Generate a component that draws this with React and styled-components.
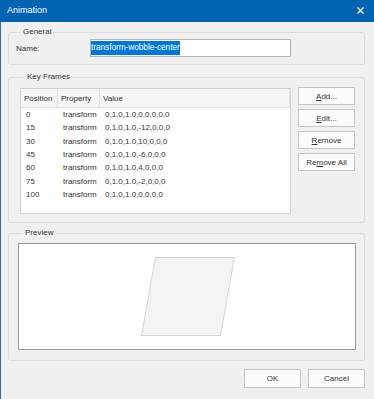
import React from "react";
import styled, { createGlobalStyle } from "styled-components";

const GlobalStyle = createGlobalStyle`
  html, body {
    margin: 0;
    padding: 0;
    background: #f0f0f0;
  }
  body {
    font-family: "Liberation Sans", Arial, sans-serif;
    font-size: 8px;
    color: #1e1e1e;
  }
`;

const frames = [
  { pos: "0", prop: "transform", value: "0,1.0,1.0,0,0,0,0,0" },
  { pos: "15", prop: "transform", value: "0,1.0,1.0,-12,0,0,0" },
  { pos: "30", prop: "transform", value: "0,1.0,1.0,10,0,0,0" },
  { pos: "45", prop: "transform", value: "0,1.0,1.0,-6,0,0,0" },
  { pos: "60", prop: "transform", value: "0,1.0,1.0,4,0,0,0" },
  { pos: "75", prop: "transform", value: "0,1.0,1.0,-2,0,0,0" },
  { pos: "100", prop: "transform", value: "0,1.0,1.0,0,0,0,0" },
];

const Window = styled.div`
  width: 374px;
  height: 399px;
  display: flex;
  flex-direction: column;
  overflow: hidden;
`;

const TitleBar = styled.div`
  height: 22px;
  flex: none;
  background: #0063b1;
  color: #fff;
  display: flex;
  align-items: center;
  justify-content: space-between;
  padding: 0 10px 2px 7px;
  box-sizing: border-box;
  font-size: 9px;
`;

const CloseIcon = styled.svg`
  width: 7px;
  height: 7px;
  display: block;
`;

const Body = styled.div`
  flex: 1;
  border-left: 1px solid #2b6cb4;
  padding: 5px 9px 0 7px;
  display: flex;
  flex-direction: column;
`;

const Group = styled.fieldset`
  margin: ${(p) => p.$top || 0}px 0 0 0;
  padding: ${(p) => p.$pad};
  border: 1px solid #dcdcdc;
  border-radius: 3px;
  min-width: 0;
`;

const Legend = styled.legend`
  margin-left: 5px;
  padding: 0 2px;
  font-size: 8px;
  line-height: 10px;
  color: #333;
`;

const FieldRow = styled.div`
  display: flex;
  align-items: center;
`;

const Label = styled.label`
  width: 74px;
  color: #333;
`;

const TextBox = styled.div`
  width: 201px;
  height: 18px;
  box-sizing: border-box;
  border: 1px solid #b4b4b4;
  background: #fff;
  display: flex;
  align-items: center;
  padding-left: 0;
`;

const Selected = styled.span`
  background: #0078d7;
  color: #fff;
  line-height: 14px;
  font-size: 8.2px;
`;

const KeyFramesBody = styled.div`
  display: flex;
  gap: 7px;
  align-items: flex-start;
`;

const List = styled.div`
  width: 271px;
  height: 126px;
  box-sizing: border-box;
  border: 1px solid #d2d2d2;
  background: #fff;
`;

const Header = styled.div`
  display: grid;
  grid-template-columns: 37px 42px 1fr;
  height: 19px;
  background: #f5f5f5;
  border-bottom: 1px solid #e0e0e0;
  box-sizing: border-box;
`;

const HeaderCell = styled.div`
  display: flex;
  align-items: center;
  padding-left: 3px;
  border-right: 1px solid #e0e0e0;
  color: #333;
`;

const Row = styled.div`
  display: grid;
  grid-template-columns: 37px 42px 1fr;
  height: 13.3px;
  align-items: center;
  color: #333;
`;

const Cell = styled.div`
  padding-left: ${(p) => p.$pad || 5}px;
  white-space: nowrap;
`;

const ButtonColumn = styled.div`
  display: flex;
  flex-direction: column;
  gap: 4px;
  margin-top: -1px;
`;

const Button = styled.button`
  width: 57px;
  height: ${(p) => p.$h || 18}px;
  box-sizing: border-box;
  border: 1px solid #c4c4c4;
  background: #fcfcfc;
  font-family: "Liberation Sans", Arial, sans-serif;
  font-size: 8px;
  color: #333;
  padding: 0;
  u {
    text-decoration: underline;
  }
`;

const PreviewBox = styled.div`
  width: 338px;
  height: 107px;
  box-sizing: border-box;
  border: 1px solid #999;
  background: #fff;
`;

const PreviewSvg = styled.svg`
  display: block;
  width: 100%;
  height: 100%;
`;

const Footer = styled.div`
  display: flex;
  justify-content: flex-end;
  gap: 7px;
  padding-top: 8px;
`;

export default function App() {
  return (
    <>
      <GlobalStyle />
      <Window>
        <TitleBar>
          <span>Animation</span>
          <CloseIcon viewBox="0 0 7 7">
            <path d="M0.5 0.5 L6.5 6.5 M6.5 0.5 L0.5 6.5" stroke="#fff" strokeWidth="1.3" />
          </CloseIcon>
        </TitleBar>
        <Body>
          <Group $pad="2px 7px 7px 7px">
            <Legend>General</Legend>
            <FieldRow>
              <Label>Name:</Label>
              <TextBox>
                <Selected>transform-wobble-center</Selected>
              </TextBox>
            </FieldRow>
          </Group>

          <Group $top={7} $pad="6px 8px 8px 11px">
            <Legend>Key Frames</Legend>
            <KeyFramesBody>
              <List>
                <Header>
                  <HeaderCell>Position</HeaderCell>
                  <HeaderCell>Property</HeaderCell>
                  <HeaderCell>Value</HeaderCell>
                </Header>
                {frames.map((f) => (
                  <Row key={f.pos}>
                    <Cell>{f.pos}</Cell>
                    <Cell>{f.prop}</Cell>
                    <Cell>{f.value}</Cell>
                  </Row>
                ))}
              </List>
              <ButtonColumn>
                <Button>
                  <u>A</u>dd...
                </Button>
                <Button>
                  <u>E</u>dit...
                </Button>
                <Button>
                  <u>R</u>emove
                </Button>
                <Button>
                  Re<u>m</u>ove All
                </Button>
              </ButtonColumn>
            </KeyFramesBody>
          </Group>

          <Group $top={5} $pad="5px 7px 10px 9px">
            <Legend>Preview</Legend>
            <PreviewBox>
              <PreviewSvg viewBox="0 0 336 105">
                <polygon
                  points="136.5,13.5 215.5,13.5 201.5,91.5 122.5,91.5"
                  fill="#f3f3f3"
                  stroke="#d4d4d4"
                  strokeWidth="1"
                />
              </PreviewSvg>
            </PreviewBox>
          </Group>

          <Footer>
            <Button $h={19}>OK</Button>
            <Button $h={19}>Cancel</Button>
          </Footer>
        </Body>
      </Window>
    </>
  );
}
